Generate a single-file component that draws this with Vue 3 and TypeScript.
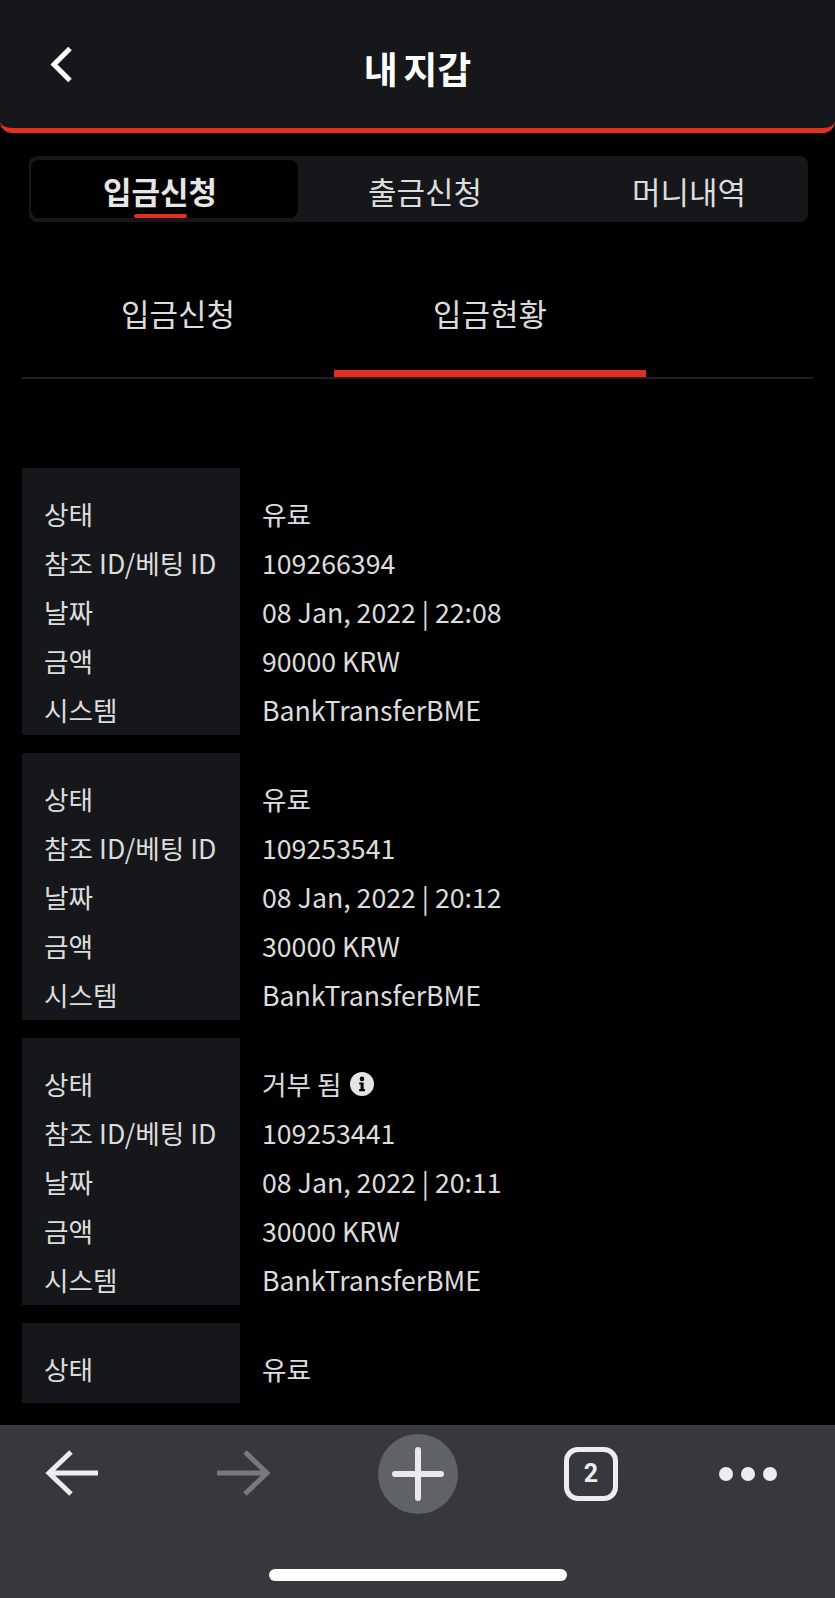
<script setup lang="ts">
interface Deposit {
  key: number
  rows: string[]
  info?: boolean
}

const labels = ["상태", "참조 ID/베팅 ID", "날짜", "금액", "시스템"]
const mainTabs = ["입금신청", "출금신청", "머니내역"]

// the last entry is only partly on screen, above the browser toolbar
const deposits: Deposit[] = [
  { key: 1, rows: ["유료", "109266394", "08 Jan, 2022 | 22:08", "90000 KRW", "BankTransferBME"] },
  { key: 2, rows: ["유료", "109253541", "08 Jan, 2022 | 20:12", "30000 KRW", "BankTransferBME"] },
  { key: 3, rows: ["거부 됨", "109253441", "08 Jan, 2022 | 20:11", "30000 KRW", "BankTransferBME"], info: true },
  { key: 4, rows: ["유료"] },
]
</script>

<template>
  <div class="page">
    <div class="content">
      <header class="head">
        <button class="back" aria-label="back">
          <svg width="24" height="38" viewBox="0 0 24 38" fill="none">
            <path d="M21 2.5 L5 18.5 L21 34.5" stroke="#fff" stroke-width="5" />
          </svg>
        </button>
        <h1 class="title">내 지갑</h1>
      </header>

      <nav class="main-tabs">
        <div v-for="(tab, i) in mainTabs" :key="tab" class="main-tab" :class="{ active: i === 0 }">
          <span>{{ tab }}</span>
        </div>
      </nav>

      <div class="sub-tabs">
        <div class="sub-tab">입금신청</div>
        <div class="sub-tab active">입금현황</div>
      </div>

      <div class="list">
        <div v-for="d in deposits" :key="d.key" class="card">
          <div class="labels">
            <div v-for="(value, i) in d.rows" :key="i" class="row">{{ labels[i] }}</div>
          </div>
          <div class="values">
            <div v-for="(value, i) in d.rows" :key="i" class="row">
              {{ value }}
              <svg v-if="d.info && i === 0" class="info" width="24" height="24" viewBox="0 0 24 24">
                <path
                  fill="#e4e4e4"
                  fill-rule="evenodd"
                  d="M12 0a12 12 0 1 0 0 24a12 12 0 0 0 0-24ZM12 4.6a2.3 2.3 0 1 1 0 4.6a2.3 2.3 0 0 1 0-4.6ZM9.2 10.4h4.4v6.6h1.4v2.2H9.2V17h1.4v-4.4H9.2Z"
                />
              </svg>
            </div>
          </div>
        </div>
      </div>
    </div>

    <footer class="toolbar">
      <div class="tools">
        <svg class="tool" width="54" height="48" viewBox="0 0 54 48" fill="none">
          <path d="M53 24H4M26 3 L4 24 L26 45" stroke="#eceded" stroke-width="5" />
        </svg>
        <svg class="tool" width="54" height="48" viewBox="0 0 54 48" fill="none">
          <path d="M0 24H49M28 3 L50 24 L28 45" stroke="#77797c" stroke-width="5" />
        </svg>
        <div class="plus">
          <svg width="54" height="54" viewBox="0 0 54 54" fill="none">
            <path d="M4 27H50M27 3V51" stroke="#e9eaec" stroke-width="6" stroke-linecap="round" />
          </svg>
        </div>
        <div class="count">2</div>
        <div class="dots"><i></i><i></i><i></i></div>
      </div>
      <div class="home"></div>
    </footer>
  </div>
</template>

<style scoped>
.page {
  width: 835px;
  height: 1598px;
  display: flex;
  flex-direction: column;
  background: #000;
  color: #dcdcdc;
  font-family: "Noto Sans CJK KR", "Noto Sans", sans-serif;
  overflow: hidden;
}
.content {
  height: 1403px;
  flex: none;
}
.head {
  position: relative;
  height: 133px;
  box-sizing: border-box;
  background: #15171b;
  border-bottom: 5px solid #e22f22;
  border-radius: 0 0 12px 12px;
  display: flex;
  align-items: center;
  justify-content: center;
}
.back {
  position: absolute;
  left: 49px;
  top: 46px;
  padding: 0;
  border: 0;
  background: none;
  line-height: 0;
}
.title {
  margin: 8px 0 0;
  font-size: 37px;
  font-weight: 700;
  word-spacing: -3px;
  color: #fff;
}
.main-tabs {
  margin: 23px 27px 0 29px;
  height: 66px;
  box-sizing: border-box;
  padding: 4px 2px 4px;
  background: #15171b;
  border-radius: 8px;
  display: grid;
  grid-template-columns: 267px 264px 1fr;
}
.main-tab {
  position: relative;
  display: flex;
  align-items: center;
  padding: 2px 0 0 70px;
  font-size: 31px;
  border-radius: 8px;
}
.main-tab.active {
  padding-left: 72px;
  background: #000;
  color: #e6e6e6;
  font-weight: 700;
}
.main-tab.active::after {
  content: "";
  position: absolute;
  left: 103px;
  bottom: 0;
  width: 53px;
  height: 4px;
  border-radius: 2px;
  background: #e22f22;
}
.sub-tabs {
  margin: 0 22px;
  height: 157px;
  box-sizing: border-box;
  border-bottom: 2px solid #1f2127;
  display: flex;
  align-items: flex-end;
}
.sub-tab {
  width: 312px;
  height: 100px;
  box-sizing: border-box;
  padding-top: 6px;
  text-align: center;
  font-size: 31px;
  line-height: 60px;
}
.sub-tab.active {
  border-bottom: 7px solid #e22f22;
}
.list {
  margin: 89px 22px 0;
  display: flex;
  flex-direction: column;
  gap: 18px;
}
.card {
  display: flex;
  flex: none;
  font-size: 26.7px;
}
.card:last-child .labels {
  padding-bottom: 10px;
}
.labels {
  width: 218px;
  flex: none;
  box-sizing: border-box;
  padding: 21px 0 1px 22px;
  background: #15171b;
}
.values {
  padding: 21px 0 1px 22px;
}
.row {
  height: 49px;
  line-height: 49px;
  white-space: nowrap;
  display: flex;
  align-items: center;
  gap: 8px;
}
.toolbar {
  flex: 1;
  margin-top: 22px;
  background: #37383d;
  position: relative;
}
.tools {
  position: relative;
  height: 144px;
}
.tool,
.plus,
.count,
.dots {
  position: absolute;
}
.tool:nth-child(1) {
  left: 45px;
  top: 24px;
}
.tool:nth-child(2) {
  left: 217px;
  top: 24px;
}
.plus {
  left: 378px;
  top: 9px;
  width: 80px;
  height: 80px;
  border-radius: 50%;
  background: #5f6267;
  display: flex;
  align-items: center;
  justify-content: center;
}
.count {
  left: 564px;
  top: 22px;
  width: 54px;
  height: 54px;
  box-sizing: border-box;
  border: 5px solid #ededee;
  border-radius: 14px;
  color: #ededee;
  font-family: Roboto, sans-serif;
  font-size: 25px;
  font-weight: 700;
  line-height: 44px;
  text-align: center;
}
.dots {
  left: 719px;
  top: 42px;
  display: flex;
  gap: 8px;
}
.dots i {
  width: 14px;
  height: 14px;
  border-radius: 50%;
  background: #ededee;
}
.home {
  position: absolute;
  left: 269px;
  top: 144px;
  width: 298px;
  height: 12px;
  border-radius: 6px;
  background: #fff;
}
</style>

<style>
html,
body {
  background: #000;
}
</style>
